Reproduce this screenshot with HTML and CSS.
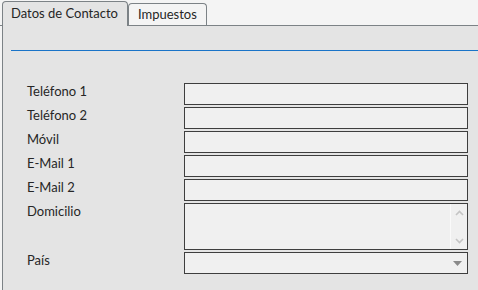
FILE: index.html
```html
<!DOCTYPE html>
<html lang="es">
<head>
    <meta charset="UTF-8">
    <meta name="viewport" content="width=device-width, initial-scale=1.0">
    <title>Datos de Contacto</title>
    <link rel="stylesheet" href="styles.css">
</head>
<body>
    <div class="tabs">
        <div class="tab active">Datos de Contacto</div>
        <div class="tab">Impuestos</div>
    </div>

    <div class="panel">
        <div class="section-line"></div>

        <div class="form">
            <label class="label">Teléfono 1</label>
            <div class="field"></div>

            <label class="label">Teléfono 2</label>
            <div class="field"></div>

            <label class="label">Móvil</label>
            <div class="field"></div>

            <label class="label">E-Mail 1</label>
            <div class="field"></div>

            <label class="label">E-Mail 2</label>
            <div class="field"></div>

            <label class="label">Domicilio</label>
            <div class="field area">
                <div class="scroll">
                    <svg width="9" height="6" viewBox="0 0 9 6"><path d="M1 5 L4.5 1.5 L8 5" fill="none" stroke="#c4c4c4" stroke-width="1.6"/></svg>
                    <svg width="9" height="6" viewBox="0 0 9 6"><path d="M1 1 L4.5 4.5 L8 1" fill="none" stroke="#c4c4c4" stroke-width="1.6"/></svg>
                </div>
            </div>

            <label class="label">País</label>
            <div class="field select">
                <svg width="9" height="5" viewBox="0 0 9 5"><path d="M0 0 H9 L4.5 5 Z" fill="#8a8a8a"/></svg>
            </div>
        </div>
    </div>
</body>
</html>
```

FILE: styles.css
```css
body {
    margin: 0;
    font-family: Lato, "Open Sans", sans-serif;
    font-size: 13px;
    color: #262626;
    background-color: #f4f4f4;
    height: 290px;
    overflow: hidden;
}

.tabs {
    display: flex;
    align-items: flex-end;
    height: 25px;
    padding-left: 2px;
    border-bottom: 1px solid #7c8286;
}

.tab {
    height: 21px;
    line-height: 20px;
    padding: 0 9px;
    background-color: #f4f4f4;
    border: 1px solid #7c8286;
    border-bottom: none;
    border-radius: 4px 4px 0 0;
}

.tab.active {
    height: 24px;
    padding: 0 9px 0 8px;
    line-height: 23px;
    background-color: #e4e4e4;
    margin-bottom: -1px;
}

.panel {
    background-color: #e4e4e4;
    border-left: 1px solid #7c8286;
    margin-left: 2px;
    height: 264px;
}

.section-line {
    margin-left: 8px;
    padding-top: 24px;
    border-bottom: 1px solid #1a74c8;
}

.form {
    display: grid;
    grid-template-columns: 157px 284px;
    row-gap: 2px;
    padding: 32px 0 0 24px;
}

.label {
    line-height: 16px;
}

.field {
    height: 20px;
    background-color: #f0f0f0;
    border: 1px solid #3e3e3e;
}

.field.area {
    height: 45px;
    display: flex;
    justify-content: flex-end;
}

.scroll {
    width: 16px;
    border-left: 1px solid #fafafa;
    display: flex;
    flex-direction: column;
    justify-content: space-between;
    align-items: center;
    padding: 6px 0 5px;
}

.field.select {
    display: flex;
    justify-content: flex-end;
    align-items: center;
    padding-right: 5px;
}
```
